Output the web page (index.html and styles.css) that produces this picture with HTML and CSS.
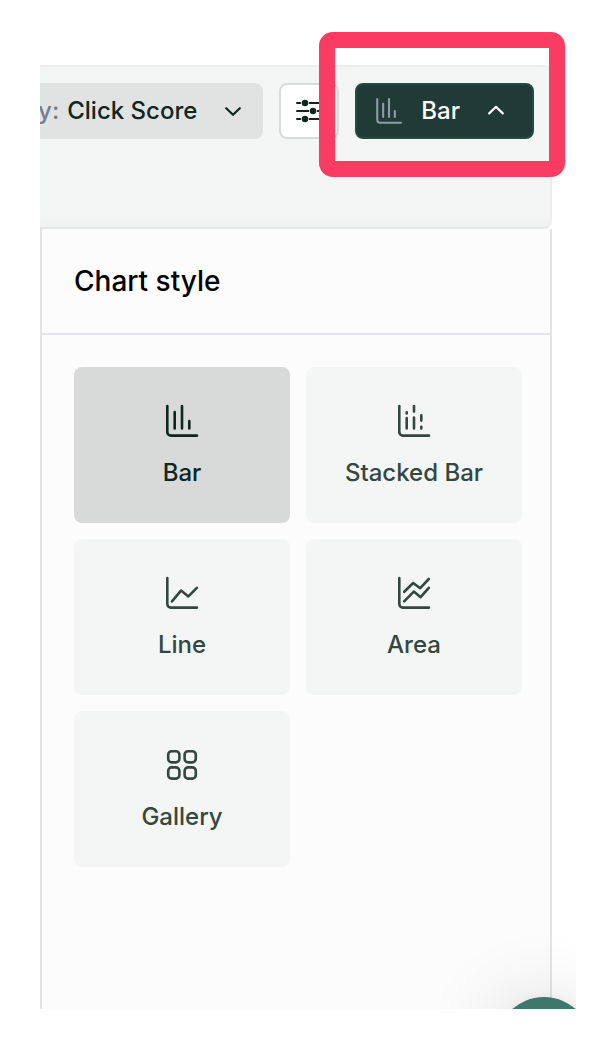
FILE: index.html
```html
<!DOCTYPE html>
<html lang="en">
<head>
<meta charset="utf-8">
<meta name="viewport" content="width=device-width, initial-scale=1">
<title>Chart style</title>
<link rel="stylesheet" href="styles.css">
</head>
<body>
<main class="stage">
  <div class="toolbar">
    <div class="sort-clip">
      <button class="sort" type="button">
        <span class="sort-label">y:</span>
        <span class="sort-value">Click Score</span>
        <svg class="chevron" viewBox="0 0 24 24" aria-hidden="true"><path d="M5.2 9.2 12 15.8l6.8-6.6"/></svg>
      </button>
    </div>
    <button class="filter" type="button" aria-label="Filters">
      <svg class="icon-filter" viewBox="0 0 32 32" aria-hidden="true">
        <path d="M4 8h3.4M16.6 8H28M4 16h11.4M24.6 16H28M4 24h3.4M16.6 24H28"/>
        <circle cx="12" cy="8" r="3.2"/><circle cx="20" cy="16" r="3.2"/><circle cx="12" cy="24" r="3.2"/>
      </svg>
    </button>
    <div class="highlighted">
      <button class="chart-type" type="button" aria-expanded="true">
        <svg class="icon icon-small" viewBox="0 0 40 40" aria-hidden="true"><path d="M5.3 5v26a3.6 3.6 0 0 0 3.6 3.6H35M12.7 11v16.5M20 5v22.5M27.3 20v7.5"/></svg>
        <span>Bar</span>
        <svg class="chevron" viewBox="0 0 24 24" aria-hidden="true"><path d="M5.2 14.4 12 7.8l6.8 6.6"/></svg>
      </button>
      <div class="highlight"></div>
    </div>
  </div>

  <section class="panel">
    <h1 class="panel-title">Chart style</h1>
    <div class="options">
      <button class="option selected" type="button" aria-pressed="true">
        <svg class="icon" viewBox="0 0 40 40" aria-hidden="true"><path d="M5.3 5v26a3.6 3.6 0 0 0 3.6 3.6H35M12.7 11v16.5M20 5v22.5M27.3 20v7.5"/></svg>
        <span>Bar</span>
      </button>
      <button class="option" type="button">
        <svg class="icon" viewBox="0 0 40 40" aria-hidden="true"><path d="M5.3 5v26a3.6 3.6 0 0 0 3.6 3.6H35M12.7 11.2v1.2M12.7 17v10.5M20 5v5.6M20 16.6v10.9M27.3 14.4v5.2M27.3 25.8v1.7"/></svg>
        <span>Stacked Bar</span>
      </button>
      <button class="option" type="button">
        <svg class="icon" viewBox="0 0 40 40" aria-hidden="true"><path d="M5.3 5v26a3.6 3.6 0 0 0 3.6 3.6H35M10 28.4l9-10.8 7.4 5.8 8.4-8.6"/></svg>
        <span>Line</span>
      </button>
      <button class="option" type="button">
        <svg class="icon" viewBox="0 0 40 40" aria-hidden="true"><path d="M5.3 5v26a3.6 3.6 0 0 0 3.6 3.6H35M10.2 18.8l9-8.8 7 5.2L34.8 6M10.2 28.4l9.6-9.8 6.8 5.6 8.2-9.4"/></svg>
        <span>Area</span>
      </button>
      <button class="option" type="button">
        <svg class="icon" viewBox="0 0 40 40" aria-hidden="true"><rect x="6.2" y="6.2" width="11.2" height="11.2" rx="3.6"/><rect x="22.6" y="6.2" width="11.2" height="11.2" rx="3.6"/><rect x="6.2" y="22.4" width="11.2" height="11.2" rx="3.6"/><rect x="22.6" y="22.4" width="11.2" height="11.2" rx="3.6"/></svg>
        <span>Gallery</span>
      </button>
    </div>
  </section>

  <div class="chat-layer">
    <button class="chat" type="button" aria-label="Open chat"></button>
  </div>
</main>
</body>
</html>
```
FILE: styles.css
```css
* {
  box-sizing: border-box;
}

body {
  margin: 0;
  background: #fff;
  font-family: Inter, "Liberation Sans", sans-serif;
}

button {
  margin: 0;
  padding: 0;
  border: 0;
  font: inherit;
  font-size: 24px;
  font-weight: 500;
  line-height: 32px;
  cursor: pointer;
}

svg {
  display: block;
  flex: none;
  fill: none;
  stroke: currentColor;
  stroke-linecap: round;
  stroke-linejoin: round;
}

.stage {
  position: relative;
  display: flex;
  flex-direction: column;
  min-height: calc(100vh - 105px);
  margin: 65px 40px 40px;
  padding-right: 24px;
}

.toolbar {
  display: flex;
  align-items: flex-start;
  gap: 16px;
  height: 164px;
  padding: 16px 16px 0 0;
  border: 2px solid #ededee;
  border-left: 0;
  border-bottom-color: #e6e7e7;
  border-radius: 0 8px 8px 0;
  background: linear-gradient(to top, #f0f2f1, #f4f6f5 14px);
}

.sort-clip {
  display: flex;
  flex: 1;
  justify-content: flex-end;
  min-width: 0;
  overflow: hidden;
}

.sort {
  display: flex;
  flex: none;
  align-items: center;
  height: 56px;
  padding-right: 18px;
  border-radius: 0 8px 8px 0;
  background: #e1e3e2;
  color: #0f261f;
}

.sort-label {
  margin-right: 8px;
  color: #747b8c;
}

.sort-value {
  margin-right: 24px;
}

.chevron {
  width: 24px;
  height: 24px;
  stroke-width: 2.2;
}

.filter {
  display: grid;
  place-items: center;
  width: 60px;
  height: 56px;
  border: 2px solid #d6dcda;
  border-radius: 8px;
  background: #fff;
  color: #0f261f;
}

.icon-filter {
  width: 32px;
  height: 32px;
  stroke-width: 2;
}

.icon-filter circle {
  fill: currentColor;
  stroke: none;
}

.highlighted {
  position: relative;
}

.chart-type {
  display: flex;
  align-items: center;
  height: 56px;
  padding: 0 24px 0 16px;
  border: 2px solid #284b40;
  border-radius: 8px;
  background: #203a35;
  color: #fff;
}

.chart-type span {
  margin: 0 24px 0 16px;
}

.highlight {
  position: absolute;
  inset: -51px -31px -38px -36px;
  border: 16px solid #fb3c62;
  border-radius: 14px;
  pointer-events: none;
}

.icon {
  width: 40px;
  height: 40px;
  stroke-width: 2.6;
}

.icon-small {
  width: 32px;
  height: 32px;
  color: #929bab;
}

.panel {
  flex: 1;
  border: solid #e3e4e6;
  border-width: 0 2px;
  background: #fcfcfc;
}

.panel-title {
  margin: 0;
  padding: 34px 32px;
  border-bottom: 2px solid #e3e4e7;
  color: #000;
  font-size: 28px;
  font-weight: 500;
  line-height: 36px;
}

.options {
  display: grid;
  grid-template-columns: 1fr 1fr;
  gap: 16px;
  padding: 32px 28px 32px 32px;
}

.option {
  display: flex;
  flex-direction: column;
  align-items: center;
  gap: 16px;
  padding: 34px 0;
  border-radius: 8px;
  background: #f4f6f5;
  color: #334740;
}

.option.selected {
  background: #d8dad9;
  color: #0f261f;
}

.chat-layer {
  position: absolute;
  inset: 0;
  overflow: hidden;
  pointer-events: none;
}

.chat {
  position: absolute;
  right: -16px;
  bottom: -84px;
  width: 96px;
  height: 96px;
  border-radius: 50%;
  background: #3d7868;
  box-shadow: 0 2px 12px rgba(0, 0, 0, 0.06), 0 4px 80px rgba(0, 0, 0, 0.16);
  pointer-events: auto;
}
```
